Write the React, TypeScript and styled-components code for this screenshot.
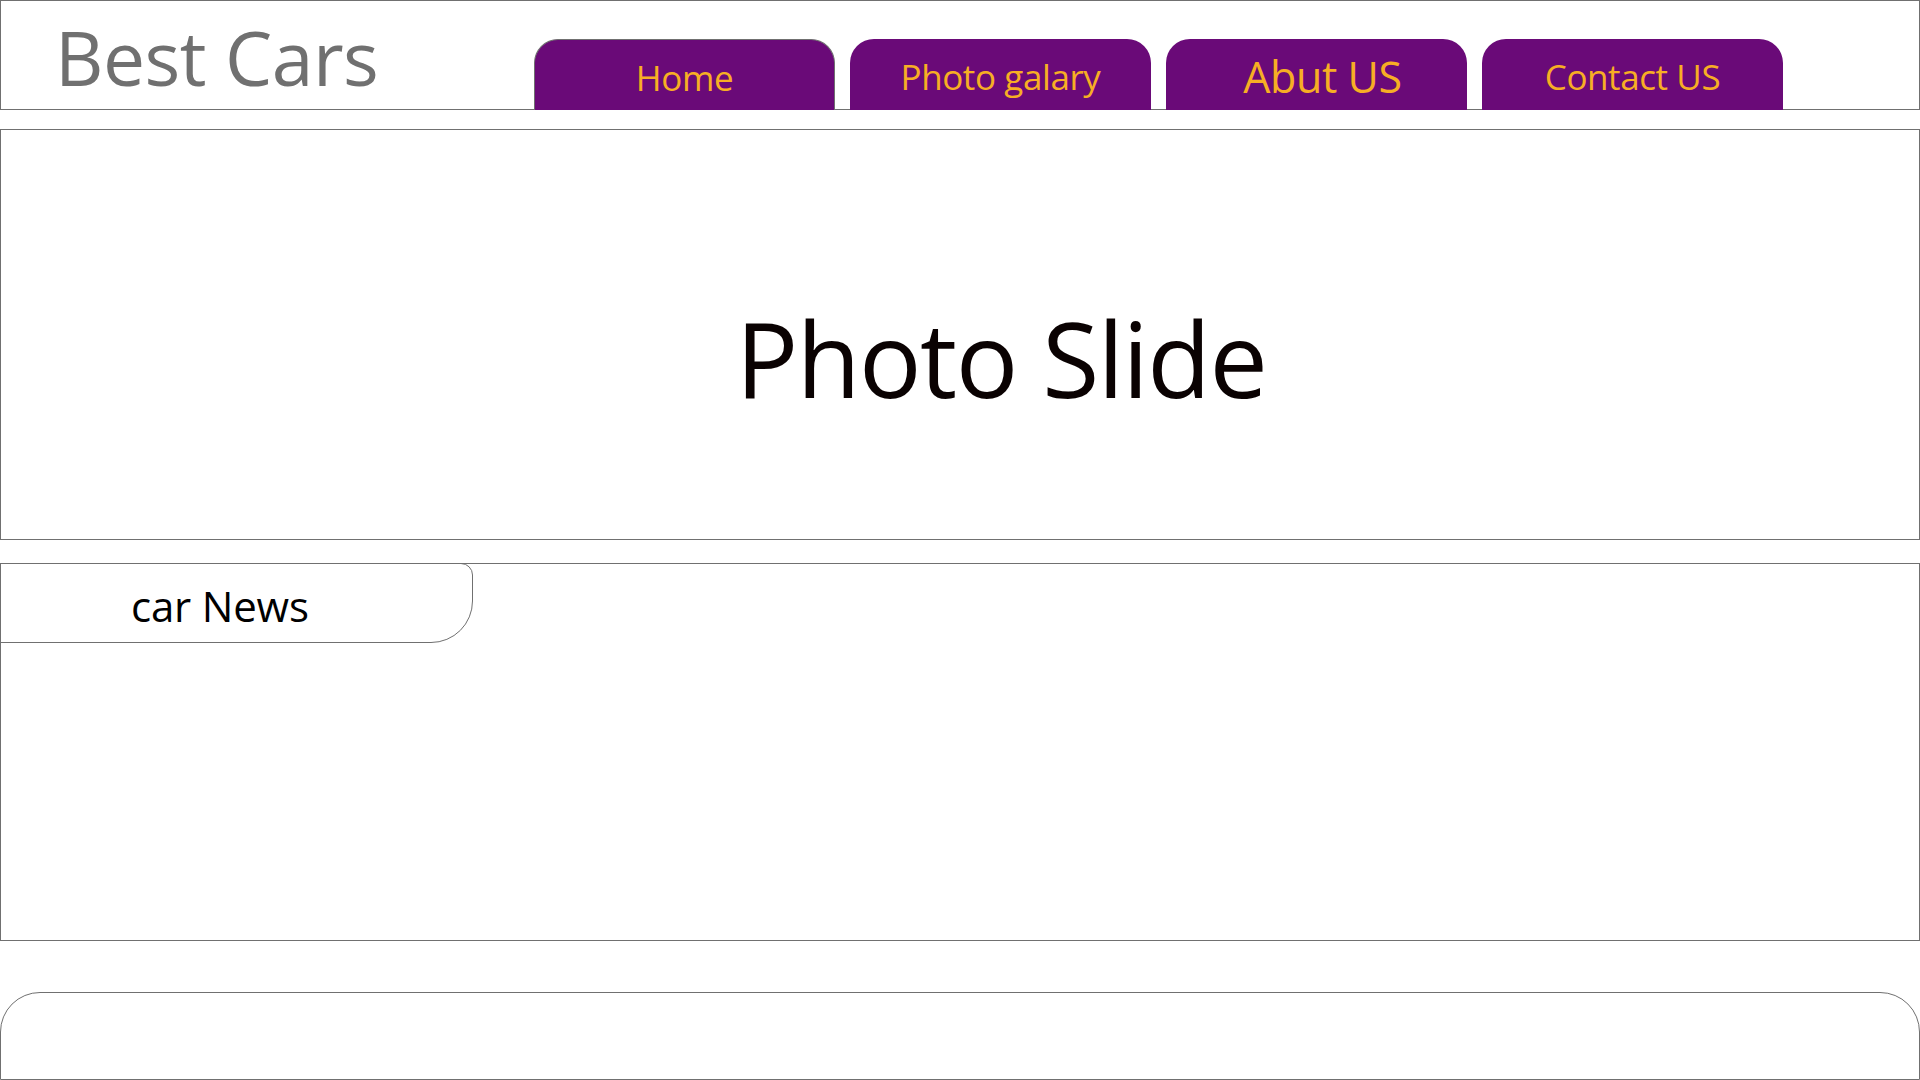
import React from "react";
import styled, { createGlobalStyle } from "styled-components";

const GlobalStyle = createGlobalStyle`
  *, *::before, *::after { box-sizing: border-box; }
  html, body { margin: 0; padding: 0; background: #ffffff; }
  body { font-family: "Open Sans", "Noto Sans", sans-serif; }
`;

const Page = styled.div`
  width: 1920px;
  height: 1080px;
  display: flex;
  flex-direction: column;
  overflow: hidden;
`;

const Header = styled.header`
  height: 110px;
  border: 1px solid #707070;
  display: grid;
  grid-template-columns: 533px 1fr;
  align-items: stretch;
`;

const Logo = styled.div`
  padding: 11px 0 0 54px;
  font-size: 75px;
  line-height: 1.2;
  color: #707070;
  letter-spacing: -0.5px;
  white-space: nowrap;
`;

const Nav = styled.nav`
  display: flex;
  gap: 15px;
  align-self: end;
  margin-bottom: -1px;
`;

const NavButton = styled.a<{ $big?: boolean; $outlined?: boolean }>`
  width: 301px;
  height: 71px;
  border-radius: 24px 24px 0 0;
  background: #6a0a78;
  border: ${(p) => (p.$outlined ? "1px solid #707070" : "none")};
  border-bottom: none;
  color: #f7ae24;
  font-size: ${(p) => (p.$big ? "43px" : "35px")};
  line-height: 1;
  display: flex;
  justify-content: center;
  align-items: flex-start;
  padding-top: ${(p) => (p.$big ? "16px" : "20px")};
  padding-left: ${(p) => (p.$big ? "12px" : "0")};
  text-decoration: none;
  letter-spacing: -0.4px;
  white-space: nowrap;
`;

const Hero = styled.section`
  margin-top: 19px;
  height: 411px;
  border: 1px solid #707070;
  display: flex;
  justify-content: center;
  align-items: center;
  padding: 48px 0 0 82px;
`;

const HeroTitle = styled.h1`
  margin: 0;
  font-weight: 400;
  font-size: 104px;
  line-height: 1.2;
  color: #0a0202;
  letter-spacing: -1.5px;
`;

const News = styled.section`
  margin-top: 23px;
  height: 378px;
  border: 1px solid #707070;
  display: flex;
  flex-direction: column;
  align-items: flex-start;
`;

const NewsTab = styled.div`
  margin: -1px 0 0 -1px;
  width: 473px;
  height: 80px;
  border: 1px solid #707070;
  border-radius: 0 12px 42px 0;
  display: flex;
  align-items: center;
  padding: 7px 0 0 130px;
  font-size: 42px;
  line-height: 1.2;
  color: #000000;
  letter-spacing: -0.2px;
`;

const Footer = styled.footer`
  margin-top: 51px;
  height: 88px;
  border: 1px solid #707070;
  border-radius: 40px 40px 0 0;
`;

export default function App() {
  return (
    <>
      <GlobalStyle />
      <Page>
        <Header>
          <Logo>Best Cars</Logo>
          <Nav>
            <NavButton href="#" $outlined>Home</NavButton>
            <NavButton href="#">Photo galary</NavButton>
            <NavButton href="#" $big>Abut US</NavButton>
            <NavButton href="#">Contact US</NavButton>
          </Nav>
        </Header>
        <Hero>
          <HeroTitle>Photo Slide</HeroTitle>
        </Hero>
        <News>
          <NewsTab>car News</NewsTab>
        </News>
        <Footer />
      </Page>
    </>
  );
}
